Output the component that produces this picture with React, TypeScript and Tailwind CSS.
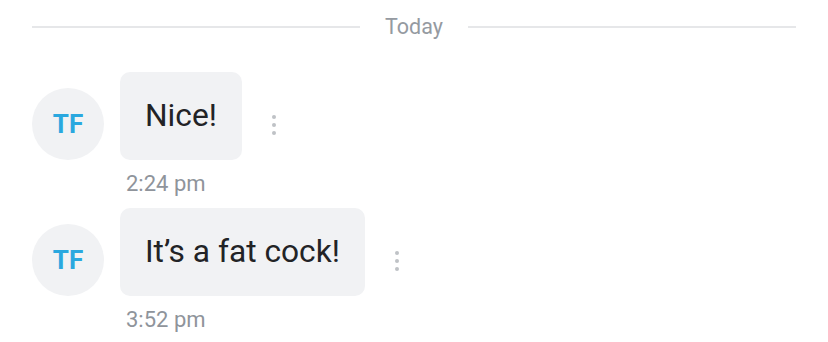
import React from 'react';

type Message = { text: string; time: string; initials: string };

const messages: Message[] = [
  { text: 'Nice!', time: '2:24 pm', initials: 'TF' },
  { text: 'It’s a fat cock!', time: '3:52 pm', initials: 'TF' },
];

function MoreDots() {
  return (
    <div className="flex flex-col gap-[4px] ml-[30px] mb-[25px]">
      <span className="w-[4px] h-[4px] rounded-full bg-[#bfc2c6]" />
      <span className="w-[4px] h-[4px] rounded-full bg-[#bfc2c6]" />
      <span className="w-[4px] h-[4px] rounded-full bg-[#bfc2c6]" />
    </div>
  );
}

export default function App() {
  return (
    <div
      className="w-[828px] h-[342px] bg-white px-8 overflow-hidden"
      style={{ fontFamily: 'Roboto, "Noto Sans", sans-serif' }}
    >
      {/* Date divider */}
      <div className="flex items-center h-[54px]">
        <div className="flex-1 h-[2px] bg-[#e6e7e9]" />
        <span className="px-[25px] text-[21.5px] text-[#959aa1]">Today</span>
        <div className="flex-1 h-[2px] bg-[#e6e7e9]" />
      </div>

      <div className="pt-[18px]">
        {messages.map((m, i) => (
          <div key={i} className="mb-[10px]">
            <div className="flex items-end">
              <div className="w-[72px] h-[72px] rounded-full bg-[#f1f2f4] flex items-center justify-center text-[26px] font-bold text-[#2aa8df]">
                {m.initials}
              </div>
              <div className="ml-4 h-[88px] px-[25px] flex items-center rounded-[10px] bg-[#f1f2f4] text-[31.7px] text-[#222326]">
                {m.text}
              </div>
              <MoreDots />
            </div>
            <div className="mt-[10px] pl-[94px] text-[22px] leading-[28px] text-[#8f949b]">{m.time}</div>
          </div>
        ))}
      </div>
    </div>
  );
}
